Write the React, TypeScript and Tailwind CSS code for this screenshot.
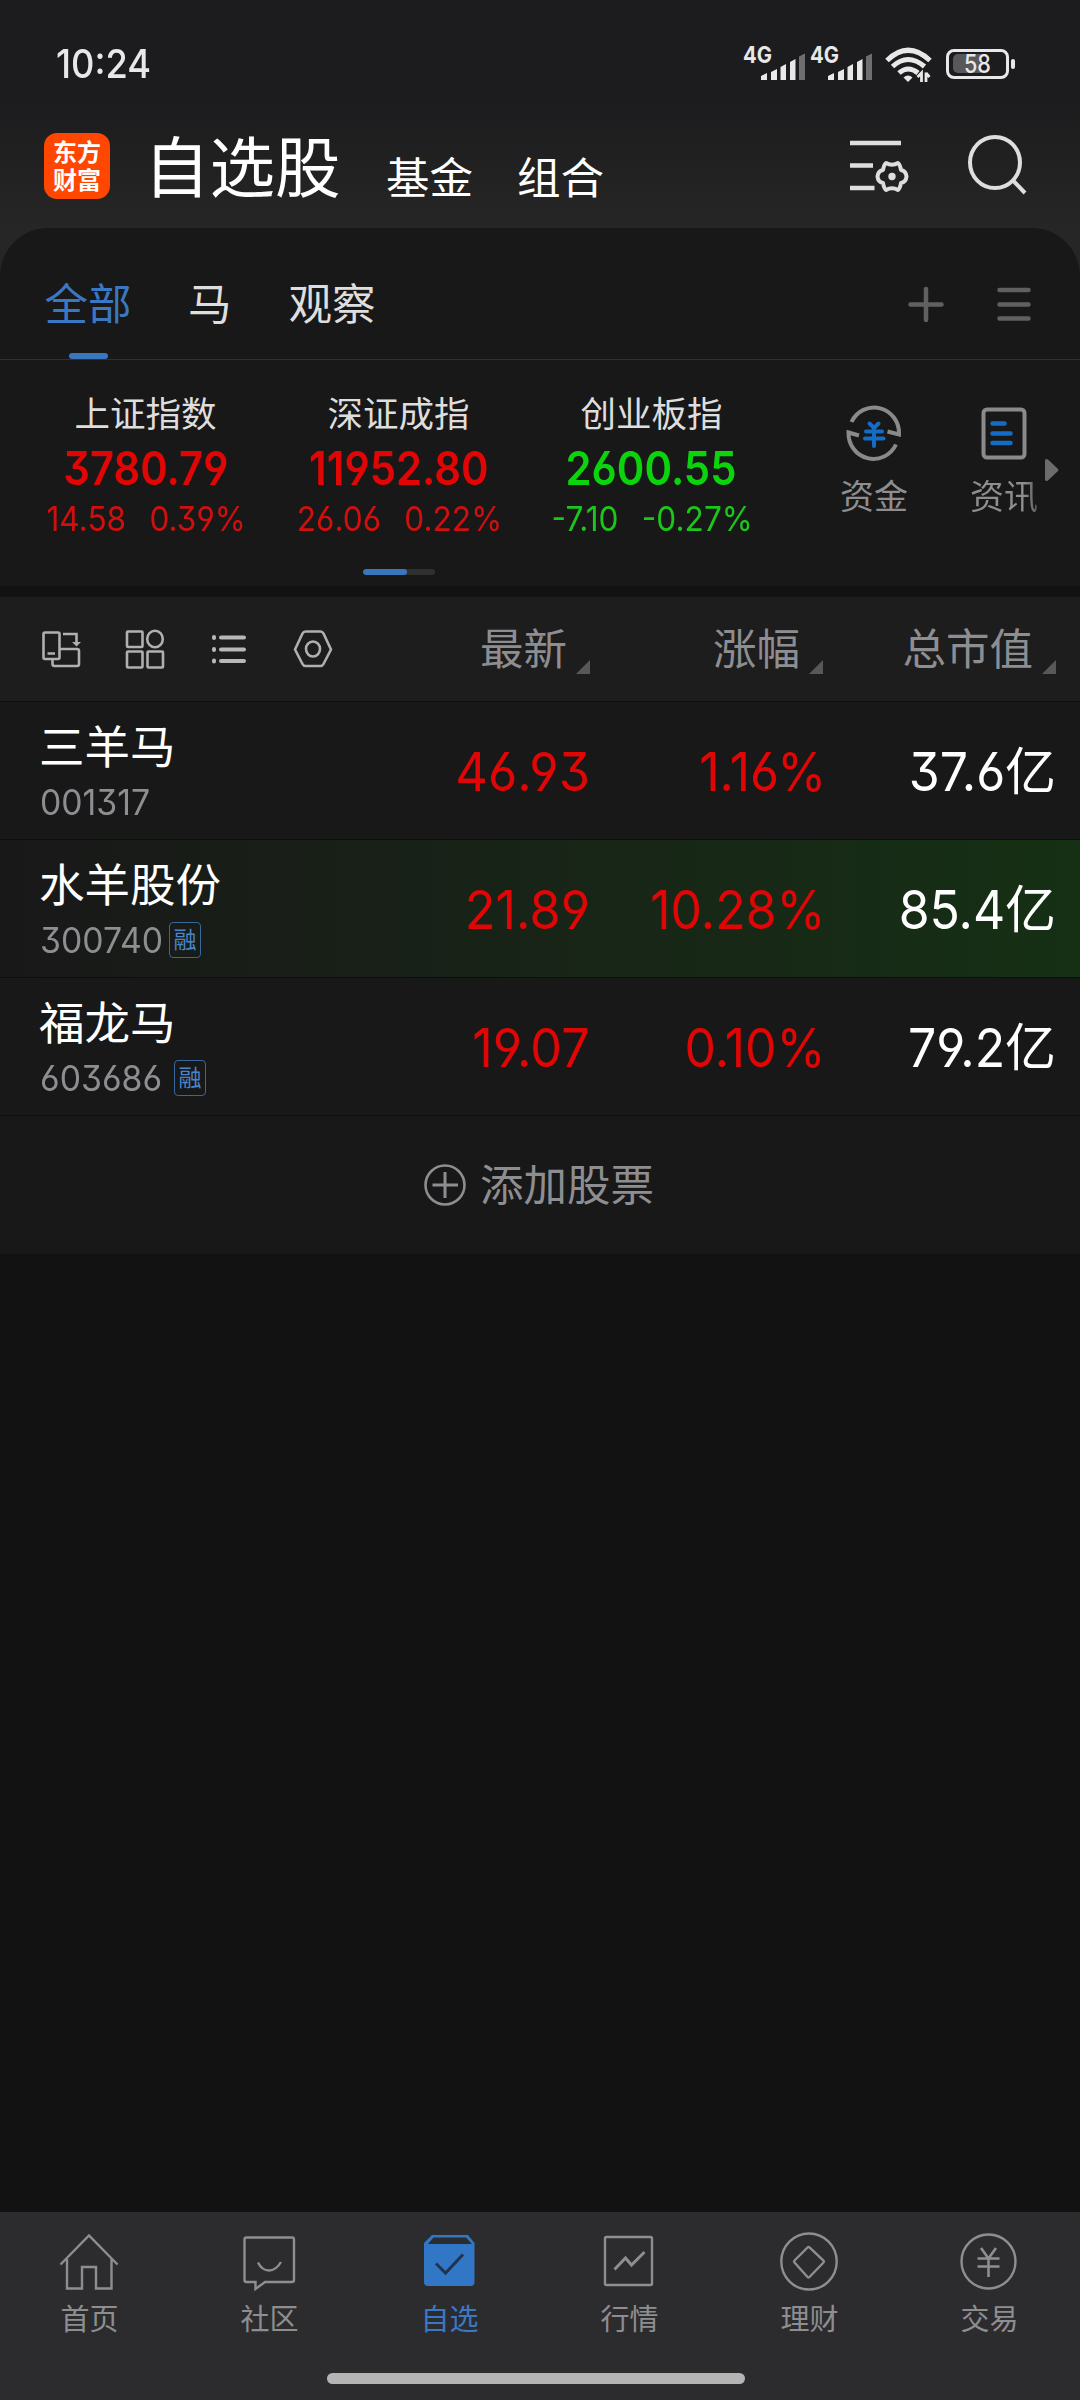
import React from "react";

type IndexQuote = {
  name: string;
  value: string;
  diff: string;
  pct: string;
  up: boolean;
};

const indices: IndexQuote[] = [
  { name: "上证指数", value: "3780.79", diff: "14.58", pct: "0.39%", up: true },
  { name: "深证成指", value: "11952.80", diff: "26.06", pct: "0.22%", up: true },
  { name: "创业板指", value: "2600.55", diff: "-7.10", pct: "-0.27%", up: false },
];

const stocks = [
  { name: "三羊马", code: "001317", codeWidth: "w-[110px]", margin: false, price: "46.93", pct: "1.16%", cap: "37.6", hot: false },
  { name: "水羊股份", code: "300740", codeWidth: "w-[120px]", margin: true, price: "21.89", pct: "10.28%", cap: "85.4", hot: true },
  { name: "福龙马", code: "603686", codeWidth: "w-[125px]", margin: true, price: "19.07", pct: "0.10%", cap: "79.2", hot: false },
];

function Signal() {
  return (
    <svg className="overflow-visible" width="61" height="36" viewBox="0 -2 61 36" fill="#e8e8e8">
      <text x="-1" y="16" fontSize="23" fontWeight="700" textLength="29" lengthAdjust="spacingAndGlyphs">4G</text>
      <path d="M17 29l6-3v7h-6z M27 25l6-3v11h-6z M36.500 20l5.500-3v16h-5.500z M46 15l5.500-3v21H46z" />
      <path d="M55 9.500l6-3v26.500h-6z" fill="#6e6e70" />
    </svg>
  );
}

function StatusBar() {
  return (
    <div className="flex h-[128px] items-start pt-[43px] pl-[56px] pr-[64px] text-[#e8e8e8]">
      <span className="h-[42px] origin-left scale-x-[.93] text-[39px] leading-[42px] font-medium">10:24</span>
      <div className="ml-auto flex items-start gap-[6px] pt-[2px]">
        <Signal />
        <Signal />
        <svg className="ml-[7px]" width="48" height="38" viewBox="0 -1 48 38" fill="none" stroke="#e8e8e8" strokeWidth="5">
          <path d="M2 14.500Q23 -6 45 14.500" />
          <path d="M7.500 20.500Q23 6.500 39.500 20.500" />
          <path d="M14 27Q23 19 33 27" />
          <path d="M18.500 31.500Q23 27.500 27.500 31.500L23 36z" fill="#e8e8e8" stroke="none" />
          <path d="M36.500 36V27L32.500 31M41 26.500V36M41 27L44.500 31" strokeWidth="2.800" />
        </svg>
        <svg className="ml-[7px]" width="70" height="38" viewBox="0 -1 70 38" fill="none">
          <rect x="1.500" y="4.500" width="60" height="27" rx="6.500" stroke="#e8e8e8" strokeWidth="3" />
          <path d="M12 8h23v19H12a5 5 0 0 1-5-5v-9a5 5 0 0 1 5-5z" fill="#58585a" />
          <rect x="65" y="13" width="4" height="10" rx="2" fill="#e8e8e8" />
          <text x="18" y="27" fontSize="25" fontWeight="500" fill="#e8e8e8" textLength="27" lengthAdjust="spacingAndGlyphs">58</text>
        </svg>
      </div>
    </div>
  );
}

function AppHeader() {
  return (
    <div className="flex h-[100px] items-start pl-[44px]">
      <div className="mt-[5px] flex h-[66px] w-[66px] flex-col items-center justify-center rounded-[13px] bg-[#ff4702] pb-[2px] font-['Noto_Sans_CJK_SC',sans-serif] text-[24px] leading-[28px] font-bold text-white">
        <span>东方</span>
        <span>财富</span>
      </div>
      <div className="ml-[34px] flex items-start text-white">
        <span className="mt-[2px] w-[200px] text-[65.500px] leading-[78px]">自选股</span>
        <span className="mt-[20px] ml-[42px] text-[43.500px] leading-[60px]">基金</span>
        <span className="mt-[20px] ml-[44px] text-[43.500px] leading-[60px]">组合</span>
      </div>
      <svg className="mt-[6px] ml-auto" width="64" height="60" viewBox="0 0 64 60" fill="none" stroke="#dedede" strokeWidth="4.500">
        <path d="M2 9h51M2 31.500h23M2 54h24.500" />
        <path strokeWidth="4" strokeLinejoin="round" d="M38 29Q44 32.500 50 29Q52 30.500 53 36Q58 37 58.500 42.500Q58 48 53 49Q52 54.500 50 56Q44 52.500 38 56Q36 54.500 35 49Q30 48 29.500 42.500Q30 37 35 36Q36 30.500 38 29Z" />
        <circle cx="44" cy="42.500" r="3.700" fill="#dedede" stroke="none" />
      </svg>
      <svg className="mt-[6px] mr-[50px] ml-[54px]" width="64" height="62" viewBox="0 0 64 62" fill="none" stroke="#dedede" strokeWidth="4">
        <ellipse cx="29" cy="28.500" rx="25" ry="25.500" />
        <path d="M46.500 46l12.500 13" />
      </svg>
    </div>
  );
}

function GroupTabs() {
  return (
    <div className="flex h-[132px] items-start border-b border-[#303030] pl-[44px] text-[43.500px] leading-[48px] text-[#dedede]">
      <div className="flex h-[131px] w-[88px] flex-col items-center pt-[52px] text-[#3b78c3]">
        <span>全部</span>
        <span className="mt-auto h-[6px] w-[39px] rounded-full bg-[#3876bd]" />
      </div>
      <span className="mt-[52px] ml-[56px]">马</span>
      <span className="mt-[52px] ml-[57px]">观察</span>
      <svg className="mt-[56px] ml-auto" width="40" height="40" viewBox="0 0 40 40" stroke="#606060" strokeWidth="4.500" strokeLinecap="round">
        <path d="M4.500 20.500h31M20 5v31" />
      </svg>
      <svg className="mt-[56px] mr-[46px] ml-[48px]" width="40" height="40" viewBox="0 0 40 40" stroke="#606060" strokeWidth="4.500" strokeLinecap="round">
        <path d="M5.500 6h29M5.500 20.500h29M5.500 34.500h29" />
      </svg>
    </div>
  );
}

function IndexPanel() {
  return (
    <div className="h-[226px]">
      <div className="flex h-[209px] pl-[20px]">
        {indices.map((q) => (
          <div key={q.name} className="flex w-[253px] flex-col items-center pt-[37px]">
            <span className="mr-[2px] text-[35.500px] leading-[36px] text-[#dedede]">{q.name}</span>
            <span className={`mt-[11px] mr-[2px] scale-x-[.89] text-[47px] leading-[48px] font-semibold ${q.up ? "text-[#e00605]" : "text-[#0cd40c]"}`}>{q.value}</span>
            <span className={`mt-[9px] mr-px flex scale-x-[.93] gap-[25px] text-[34px] leading-[36px] ${q.up ? "text-[#d0100e]" : "text-[#1cc61c]"}`}>
              <span>{q.diff}</span>
              <span>{q.pct}</span>
            </span>
          </div>
        ))}
        <div className="ml-[60px] flex w-[70px] flex-col items-center pt-[41px] text-[34px] leading-[36px] text-[#8e8e90]">
          <svg width="60" height="64" viewBox="0 0 60 64" fill="none">
            <g stroke="#8a8a8a" strokeWidth="4">
              <path d="M7.500 21A25 25.500 0 0 1 55 33.500L43.500 30.500" />
              <path d="M52 43.500A25 25.500 0 0 1 4.500 31.500L15 34.500" />
            </g>
            <path d="M25.500 22.500l4.500 4.500 4.500-4.500M22 30.500h16M21 37.500h18.500M30 29v16" stroke="#146cc6" strokeWidth="4" strokeLinecap="round" />
          </svg>
          <span className="mt-[14px] w-[68px]">资金</span>
        </div>
        <div className="ml-[60px] flex w-[70px] flex-col items-center pt-[41px] text-[34px] leading-[36px] text-[#8e8e90]">
          <svg width="60" height="64" viewBox="0 0 60 64" fill="none">
            <rect x="9.500" y="8.500" width="41" height="48" rx="3.500" stroke="#8a8a8a" strokeWidth="4" />
            <path d="M18.500 22.500h12M18.500 32.500h18M18.500 42h18" stroke="#146cc6" strokeWidth="4.500" strokeLinecap="round" />
          </svg>
          <span className="mt-[14px] w-[68px] bg-linear-to-r from-[#8e8e90] from-80% to-[#5a5a5b] bg-clip-text text-transparent">资讯</span>
        </div>
        <svg className="mt-[98px] ml-[6px]" width="14" height="24" viewBox="0 0 14 24">
          <path d="M0 3Q0 0 3 1.500L13 11Q14 12 13 13L3 22.500Q0 24 0 21z" fill="#6c6c6c" />
        </svg>
      </div>
      <div className="ml-[363px] h-[6px] w-[72px] overflow-hidden rounded-full bg-[#303030]">
        <div className="h-full w-[44px] rounded-full bg-[#3876bd]" />
      </div>
    </div>
  );
}

function SortTriangle() {
  return (
    <svg className="mt-[35px] ml-[9px] shrink-0" width="14" height="14" viewBox="0 0 14 14">
      <path d="M14 0v14H0z" fill="#58585a" />
    </svg>
  );
}

function TableHeader() {
  return (
    <div className="flex h-[104px] items-center bg-[#1d1d1d] text-[43.500px] leading-[48px] text-[#8e8e92]">
      <div className="flex w-[440px] shrink-0 gap-[44px] pl-[41px]">
        <svg width="40" height="40" viewBox="0 0 40 40" fill="none" stroke="#b0b0b0" strokeWidth="2.600">
          <rect x="2.500" y="3.500" width="16" height="26.500" rx="1.500" />
          <path d="M6.500 24.500h7.500M22 5h13.500v11M19 20h17q2 0 2 2v13q0 2-2 2H13.500q-2 0-2-2v-5" />
          <path d="M31 13l4.500 4.500L40 13z" fill="#b0b0b0" stroke="none" />
        </svg>
        <svg width="40" height="40" viewBox="0 0 40 40" fill="none" stroke="#b0b0b0" strokeWidth="2.600">
          <rect x="2" y="2.500" width="15.500" height="15.500" rx="1" />
          <ellipse cx="30" cy="10" rx="7.800" ry="8.200" />
          <rect x="2" y="22.500" width="15.500" height="16" rx="1" />
          <rect x="22.500" y="22.500" width="15.500" height="16" rx="1" />
        </svg>
        <svg width="40" height="40" viewBox="0 0 40 40" fill="none" stroke="#b8b8b8" strokeWidth="4" strokeLinecap="round">
          <path d="M12 8.500h23M12 20.500h23M12 32h23M5 8v1M5 20v1M5 31.500v1" />
        </svg>
        <svg width="40" height="40" viewBox="0 0 40 40" fill="none" stroke="#b0b0b0" strokeWidth="2.600" strokeLinejoin="round">
          <path d="M12.500 2.500h15q2 0 3 2L38 20.500l-7.500 14.500q-1 2-3 2h-15q-2 0-3-2L2 20.500 9.500 4.500q1-2 3-2z" />
          <ellipse cx="20" cy="20" rx="7" ry="7.500" />
        </svg>
      </div>
      <div className="flex w-[150px] justify-end pt-px"><span>最新</span><SortTriangle /></div>
      <div className="flex w-[233px] justify-end pt-px"><span>涨幅</span><SortTriangle /></div>
      <div className="flex w-[233px] justify-end pt-px"><span>总市值</span><SortTriangle /></div>
    </div>
  );
}

function StockRow({ s }: { s: (typeof stocks)[number] }) {
  return (
    <div className={`flex h-[138px] border-t border-[#0e0e0e] ${s.hot ? "bg-linear-to-r from-[#181818] to-[#153014]" : ""}`}>
      <div className="flex w-[360px] shrink-0 flex-col pt-[23px] pl-[39px]">
        <span className="text-[45.500px] leading-[46px] text-white">{s.name}</span>
        <div className="mt-[11px] ml-px flex h-[40px] items-center">
          <span className={`${s.codeWidth} origin-left scale-x-[.965] text-[35px] leading-[40px] whitespace-nowrap text-[#8e8e92]`}>{s.code}</span>
          {s.margin && (
            <span className="ml-[9px] flex h-[36px] w-[32px] items-center justify-center rounded-[4px] border-[1.500px] border-[#37679c] text-[23px] leading-[30px] text-[#4a86cc]">融</span>
          )}
        </div>
      </div>
      <div className="flex w-[230px] items-center justify-end pt-[2px] text-[54px] text-[#e00605]">
        <span className="origin-right scale-x-[.935]">{s.price}</span>
      </div>
      <div className="flex w-[236px] items-center justify-end pt-[2px] text-[54px] text-[#e00605]">
        <span className="origin-right scale-x-[.925]">{s.pct}</span>
      </div>
      <div className="flex w-[230px] items-center justify-end pt-[2px] text-[54px] text-white">
        <span className="origin-right scale-x-[.925]">{s.cap}</span>
        <span className="pt-[2px] text-[51px]">亿</span>
      </div>
    </div>
  );
}

function AddStock() {
  return (
    <div className="flex h-[139px] items-center justify-center border-t border-[#0e0e0e] text-[43.500px] leading-[48px] text-[#8e8e92]">
      <svg width="42" height="42" viewBox="0 0 42 42" fill="none" stroke="#8e8e92" strokeWidth="2.600">
        <circle cx="21" cy="21" r="19.500" />
        <path d="M8.500 21h25.500M21 8v26" strokeWidth="3" />
      </svg>
      <span className="mr-[2px] ml-[14px]">添加股票</span>
    </div>
  );
}

const navItems: { label: string; active?: boolean; icon: React.ReactNode }[] = [
  {
    label: "首页",
    icon: <path d="M1.500 32.500L30 3.500 58.500 32.500M8 27v29.500h15V35h14v21.500h15.500V27" />,
  },
  {
    label: "社区",
    icon: (
      <>
        <path d="M8 5.500h45q2 0 2 2V48q0 2-2 2H26l-9.500 7V50H7.500q-2 0-2-2V7.500q0-2 2-2z" />
        <path d="M19 30.500Q23 38.500 30 38.500T42 30" />
      </>
    ),
  },
  {
    label: "自选",
    active: true,
    icon: (
      <>
        <path d="M13 3h36l6.500 8v39q0 4-4 4H9q-4 0-4-4V11z" fill="#3277c6" stroke="none" />
        <path d="M14.500 5.500h32.500l6 6.500H9z" fill="#2b2c2f" stroke="none" />
        <path d="M17 31.500l9.500 9.500L44 22.500" stroke="#20344e" strokeWidth="3" />
      </>
    ),
  },
  {
    label: "行情",
    icon: (
      <>
        <rect x="6" y="5" width="47" height="48" rx="1.500" />
        <path d="M15.500 37.500L26.500 26l6 7L45.500 20" strokeWidth="3" />
      </>
    ),
  },
  {
    label: "理财",
    icon: (
      <>
        <ellipse cx="30" cy="29.500" rx="27.700" ry="28" />
        <path d="M28.500 15.500q1-1 2 0l14 13q1 1 0 2l-14 14.500q-1 1-2 0l-13-14.500q-1-1 0-2z" />
      </>
    ),
  },
  {
    label: "交易",
    icon: (
      <>
        <ellipse cx="29.500" cy="29.500" rx="27" ry="27" />
        <path d="M22 16l7.500 10.500L37 16M18.500 26.500h22M18.500 34.500h22M29.500 26v19" strokeWidth="2.600" />
      </>
    ),
  },
];

function BottomNav() {
  return (
    <div className="mt-auto flex h-[188px] flex-col bg-[#2c2c2e]">
      <div className="grid grid-cols-6 pt-[20px]">
        {navItems.map((n) => (
          <div key={n.label} className={`flex flex-col items-center ${n.active ? "text-[#3b78c3]" : "text-[#8e8e90]"}`}>
            <svg className="mr-[2px]" width="60" height="60" viewBox="0 0 60 60" fill="none" stroke="currentColor" strokeWidth="2.400">{n.icon}</svg>
            <span className="mt-[12px] mr-px text-[29px] leading-[32px]">{n.label}</span>
          </div>
        ))}
      </div>
      <div className="mt-[37px] ml-[327px] h-[11px] w-[418px] rounded-full bg-[#b4b4b4]" />
    </div>
  );
}

export default function App() {
  return (
    <div className="flex h-[2400px] w-[1080px] flex-col overflow-hidden bg-[#121212] font-['Inter','Noto_Sans_CJK_SC',sans-serif] [font-feature-settings:'cv09','cv03','cv04']">
      <div className="bg-linear-to-b from-[#1c1c1e] from-[100px] to-[#262626] to-[228px]">
        <StatusBar />
        <AppHeader />
        <div className="rounded-t-[48px] bg-[#181818]">
          <GroupTabs />
          <IndexPanel />
        </div>
      </div>
      <div className="mt-[11px] bg-[#181818]">
        <TableHeader />
        {stocks.map((s) => (
          <StockRow key={s.code} s={s} />
        ))}
        <AddStock />
      </div>
      <BottomNav />
    </div>
  );
}
